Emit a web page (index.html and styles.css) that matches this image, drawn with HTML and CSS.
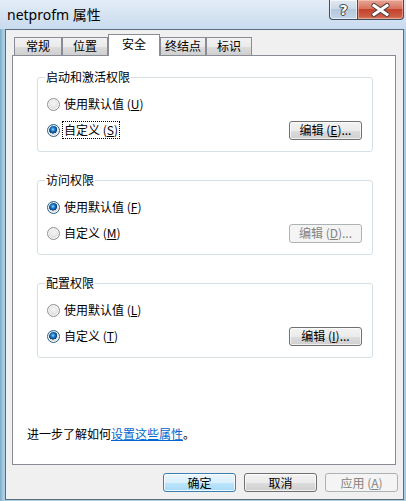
FILE: index.html
```html
<!DOCTYPE html>
<html lang="zh-CN">
<head>
<meta charset="utf-8">
<title>netprofm 属性</title>
<link rel="stylesheet" href="styles.css">
</head>
<body>
<div class="window">
  <div class="titlebar">
    <span class="title">netprofm 属性</span>
    <div class="caption-btns">
      <div class="cbtn help"><span class="qmark">?</span></div>
      <div class="cbtn close">
        <svg width="45" height="18" viewBox="0 0 45 18">
          <path d="M16 4.5 L29 13.5 M29 4.5 L16 13.5" stroke="#4a3a38" stroke-width="5" stroke-linecap="round" fill="none"/>
          <path d="M16 4.5 L29 13.5 M29 4.5 L16 13.5" stroke="#ffffff" stroke-width="3" stroke-linecap="square" fill="none"/>
        </svg>
      </div>
    </div>
  </div>
  <div class="client">
    <div class="tabs">
      <div class="tab t1">常规</div>
      <div class="tab t2">位置</div>
      <div class="tab selected">安全</div>
      <div class="tab t4">终结点</div>
      <div class="tab t5">标识</div>
    </div>
    <div class="page">
      <fieldset class="group">
        <legend>启动和激活权限</legend>
        <div class="row">
          <span class="radio"></span><span class="label">使用默认值 (<u>U</u>)</span>
        </div>
        <div class="row">
          <span class="radio checked"></span><span class="label focused">自定义 (<u>S</u>)</span>
          <span class="btn small">编辑 (<u>E</u>)...</span>
        </div>
      </fieldset>
      <fieldset class="group">
        <legend>访问权限</legend>
        <div class="row">
          <span class="radio checked"></span><span class="label">使用默认值 (<u>F</u>)</span>
        </div>
        <div class="row">
          <span class="radio"></span><span class="label">自定义 (<u>M</u>)</span>
          <span class="btn small disabled">编辑 (<u>D</u>)...</span>
        </div>
      </fieldset>
      <fieldset class="group">
        <legend>配置权限</legend>
        <div class="row">
          <span class="radio"></span><span class="label">使用默认值 (<u>L</u>)</span>
        </div>
        <div class="row">
          <span class="radio checked"></span><span class="label">自定义 (<u>T</u>)</span>
          <span class="btn small">编辑 (<u>I</u>)...</span>
        </div>
      </fieldset>
      <p class="more">进一步了解如何<a class="link" href="#">设置这些属性</a>。</p>
    </div>
    <div class="actions">
      <span class="btn default">确定</span>
      <span class="btn">取消</span>
      <span class="btn disabled">应用 (<u>A</u>)</span>
    </div>
  </div>
</div>
</body>
</html>
```

FILE: styles.css
```css
* { box-sizing: border-box; }
html, body { margin: 0; padding: 0; }
body {
  width: 406px;
  height: 501px;
  overflow: hidden;
  font-family: "Noto Sans CJK SC", "Noto Sans", sans-serif;
  font-size: 12px;
  color: #000;
  background: #9fc7de;
}

.window {
  width: 406px;
  height: 501px;
  display: flex;
  flex-direction: column;
  background:
    radial-gradient(ellipse 40px 14px at 140px 16px, rgba(90,95,120,0.35), rgba(90,95,120,0) 100%),
    radial-gradient(ellipse 30px 10px at 200px 10px, rgba(120,130,150,0.25), rgba(120,130,150,0) 100%),
    linear-gradient(to right, #7fa9c4 0, #a6cde2 3px, #a6cde2 100%) 0 29px / 100% 100% no-repeat,
    linear-gradient(to bottom, #dfeaf5 0, #d3e2f1 14px, #c8daee 28px);
}

.titlebar {
  height: 29px;
  flex: none;
  display: flex;
  align-items: flex-start;
  background: linear-gradient(to bottom, #e3edf7 0, #d6e4f2 14px, #c9dbee 29px);
}
.title {
  font-family: "Noto Sans", "Noto Sans CJK SC", sans-serif;
  font-size: 14px;
  line-height: 18px;
  margin: 6px 0 0 7px;
  color: #000;
}

.caption-btns {
  margin-left: auto;
  margin-right: 2px;
  display: flex;
}
.cbtn {
  height: 20px;
  border: 1px solid #3e4e60;
  border-top: none;
  display: flex;
  align-items: center;
  justify-content: center;
}
.help {
  width: 28px;
  border-right: none;
  border-bottom-left-radius: 4px;
  background: linear-gradient(to bottom, #e1e9f2 0, #ccd9e8 45%, #b5c8dc 50%, #c3d6e9 100%);
  box-shadow: inset 0 0 0 1px rgba(255,255,255,0.6);
}
.qmark {
  font-family: "DejaVu Sans", sans-serif;
  font-weight: bold;
  font-size: 14px;
  line-height: 14px;
  color: #fff;
  text-shadow: 0 0 1px #2a3440, 0 0 1px #2a3440, 1px 0 0 #4a5563, -1px 0 0 #4a5563, 0 1px 0 #4a5563, 0 -1px 0 #4a5563;
}
.close {
  width: 47px;
  border-bottom-right-radius: 4px;
  background: linear-gradient(to bottom, #e8a797 0, #d7735f 45%, #c4432d 50%, #cc5a42 85%, #dd7f62 100%);
  box-shadow: inset 0 0 0 1px rgba(255,220,210,0.45);
}

.client {
  flex: 1;
  margin: 0 2px 1px 5px;
  border: 1px solid #5b6c7e;
  background: #f0f0f0;
  display: flex;
  flex-direction: column;
}

.tabs {
  height: 25px;
  flex: none;
  display: flex;
  align-items: flex-end;
  padding-left: 8px;
}
.tab {
  height: 18px;
  line-height: 16px;
  text-align: center;
  border: 1px solid #898c95;
  border-bottom: none;
  background: linear-gradient(to bottom, #f2f2f2 0, #ebebeb 50%, #dddddd 51%, #cfcfcf 100%);
}
.t1 { width: 48px; }
.t2 { width: 46px; }
.t4 { width: 46px; }
.t5 { width: 46px; }
.tab.selected {
  width: 52px;
  height: 22px;
  line-height: 18px;
  margin-bottom: -1px;
  position: relative;
  background: #fff;
}

.page {
  height: 410px;
  flex: none;
  margin: 0 7px 0 6px;
  border: 1px solid #898c95;
  background: #fff;
  display: flex;
  flex-direction: column;
  padding: 0 22px 0 24px;
}

.group {
  margin: 14px 0 0 0;
  height: 82px;
  border: 1px solid #d5dfe5;
  border-radius: 3px;
  padding: 7px 10px 8px 9px;
  min-width: 0;
}
.group + .group { margin-top: 21px; }
.group legend {
  padding: 0 1px;
  margin-left: -2px;
  line-height: 14px;
  font-size: 12px;
}

.row {
  height: 26px;
  display: flex;
  align-items: center;
}
.radio {
  width: 13px;
  height: 13px;
  border-radius: 50%;
  flex: none;
  border: 1px solid #8e8f8f;
  background: radial-gradient(circle at 50% 40%, #f6f6f6 0, #e6e6e6 45%, #cfcfcf 100%);
  box-shadow: inset 0 0 0 1px #fafafa;
}
.radio.checked {
  border-color: #2c628b;
  background:
    radial-gradient(circle at 45% 40%, #9fdcff 0, #2a8ad4 1.6px, #0d5aa0 3px, #0a3f74 4px, rgba(0,0,0,0) 4.3px),
    radial-gradient(circle at 50% 40%, #f6f6f6 0, #e3e3e3 45%, #cbcbcb 100%);
}
.label {
  margin-left: 2px;
  padding: 0 1px;
  border: 1px solid transparent;
  line-height: 16px;
  white-space: nowrap;
}
.label.focused { border: 1px dotted #000; }

.btn {
  width: 73px;
  height: 19px;
  display: flex;
  align-items: center;
  justify-content: center;
  border: 1px solid #707070;
  border-radius: 3px;
  background: linear-gradient(to bottom, #f2f2f2 0, #ebebeb 50%, #dddddd 51%, #cfcfcf 100%);
  box-shadow: inset 0 0 0 1px rgba(255,255,255,0.7);
  line-height: 16px;
  white-space: nowrap;
}
.btn.small { margin-left: auto; }
.btn.disabled {
  border-color: #adb2b5;
  background: #f4f4f4;
  color: #838383;
  box-shadow: none;
}
.btn.default {
  border-color: #3c7fb1;
  background: linear-gradient(to bottom, #eaf6fd 0, #d9f0fc 50%, #bee6fd 51%, #a7d9f5 100%);
  box-shadow: inset 0 0 0 1px rgba(255,255,255,0.8);
}

.more {
  margin: auto 0 22px -10px;
  line-height: 16px;
}
.link {
  color: #0066cc;
  text-decoration: underline;
}

.actions {
  flex: 1;
  display: flex;
  justify-content: flex-end;
  align-items: flex-start;
  gap: 8px;
  padding: 8px 5px 0 0;
}
```
